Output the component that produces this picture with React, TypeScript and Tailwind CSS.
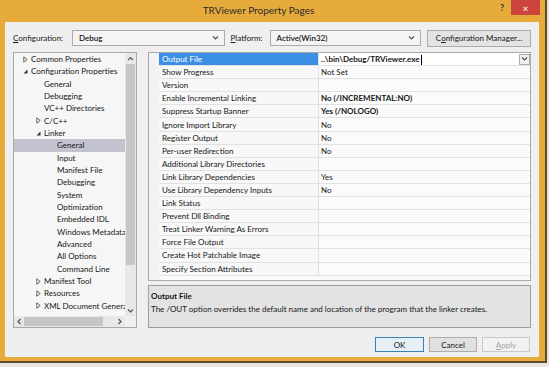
const treeItems: { label: string; level: number; arrow?: "open" | "closed"; selected?: boolean }[] = [
  { label: "Common Properties", level: 0, arrow: "closed" },
  { label: "Configuration Properties", level: 0, arrow: "open" },
  { label: "General", level: 1 },
  { label: "Debugging", level: 1 },
  { label: "VC++ Directories", level: 1 },
  { label: "C/C++", level: 1, arrow: "closed" },
  { label: "Linker", level: 1, arrow: "open" },
  { label: "General", level: 2, selected: true },
  { label: "Input", level: 2 },
  { label: "Manifest File", level: 2 },
  { label: "Debugging", level: 2 },
  { label: "System", level: 2 },
  { label: "Optimization", level: 2 },
  { label: "Embedded IDL", level: 2 },
  { label: "Windows Metadata", level: 2 },
  { label: "Advanced", level: 2 },
  { label: "All Options", level: 2 },
  { label: "Command Line", level: 2 },
  { label: "Manifest Tool", level: 1, arrow: "closed" },
  { label: "Resources", level: 1, arrow: "closed" },
  { label: "XML Document Generator", level: 1, arrow: "closed" },
];

const indent = ["pl-[9px]", "pl-[22px]", "pl-[35px]"];

const props: { name: string; value: string; bold?: boolean; selected?: boolean }[] = [
  { name: "Output File", value: "..\\bin\\Debug/TRViewer.exe", bold: true, selected: true },
  { name: "Show Progress", value: "Not Set" },
  { name: "Version", value: "" },
  { name: "Enable Incremental Linking", value: "No (/INCREMENTAL:NO)", bold: true },
  { name: "Suppress Startup Banner", value: "Yes (/NOLOGO)", bold: true },
  { name: "Ignore Import Library", value: "No" },
  { name: "Register Output", value: "No" },
  { name: "Per-user Redirection", value: "No" },
  { name: "Additional Library Directories", value: "" },
  { name: "Link Library Dependencies", value: "Yes" },
  { name: "Use Library Dependency Inputs", value: "No" },
  { name: "Link Status", value: "" },
  { name: "Prevent Dll Binding", value: "" },
  { name: "Treat Linker Warning As Errors", value: "" },
  { name: "Force File Output", value: "" },
  { name: "Create Hot Patchable Image", value: "" },
  { name: "Specify Section Attributes", value: "" },
];

const Chevron = ({ dir = "down" }: { dir?: "down" | "up" | "left" | "right" }) => {
  const d = {
    down: "M1 1.5l2.5 2.5L6 1.5",
    up: "M1 4l2.5-2.5L6 4",
    left: "M4.5 1L2 3.5 4.5 6",
    right: "M2.5 1L5 3.5 2.5 6",
  }[dir];
  const box = dir === "down" || dir === "up" ? "0 0 7 5.5" : "0 0 7 7";
  return (
    <svg width="7" height={dir === "down" || dir === "up" ? 5.5 : 7} viewBox={box}>
      <path d={d} stroke="#555" strokeWidth="1.2" fill="none" />
    </svg>
  );
};

const TreeArrow = ({ kind }: { kind: "open" | "closed" }) =>
  kind === "open" ? (
    <svg width="5" height="5" viewBox="0 0 5 5">
      <path d="M4.5 0.5V4.5H0.5Z" fill="#333" />
    </svg>
  ) : (
    <svg width="5" height="7" viewBox="0 0 5 7">
      <path d="M0.8 0.8L4.2 3.5L0.8 6.2Z" stroke="#555" strokeWidth="0.9" fill="none" />
    </svg>
  );

const Dropdown = ({ value, width }: { value: string; width: string }) => (
  <div className={`${width} h-[16px] border border-[#acacac] bg-[#f4f4f4] flex items-center justify-between pl-[6px] pr-[5px]`}>
    <span className="font-semibold">{value}</span>
    <Chevron />
  </div>
);

export default function App() {
  return (
    <div className="w-[549px] h-[367px] bg-[#e9e6df] font-['Lato',sans-serif] text-[8px] text-[#161616] overflow-hidden">
      <div className="w-[547px] h-[363px] bg-[#e6ab3b] border-r-2 border-b-2 border-[#5b4a2c] flex flex-col pl-[5px] pr-[6px] pb-[4px]">
        {/* title bar */}
        <div className="h-[22px] relative flex items-center justify-center">
          <span className="text-[10px] text-[#2b2b2b] pb-[1px] pr-[27px]">TRViewer Property Pages</span>
          <span className="absolute left-[495px] top-[1px] text-[9px] font-bold text-[#333]">?</span>
          <div className="absolute left-[506px] top-0 w-[29px] h-[15px] bg-[#cd443f] flex items-center justify-center text-white text-[10px] leading-none">
            ×
          </div>
        </div>

        {/* client */}
        <div className="flex-1 bg-[#efefef] flex flex-col px-[8px]">
          <div className="mt-[8px] h-[16px] flex items-center">
            <span className="w-[59px]">
              <span className="underline">C</span>onfiguration:
            </span>
            <Dropdown value="Debug" width="w-[153px]" />
            <span className="w-[42px] ml-[3px] pl-[3px]">
              <span className="underline">P</span>latform:
            </span>
            <Dropdown value="Active(Win32)" width="w-[152px]" />
            <div className="ml-[6px] w-[104px] h-[17px] border border-[#acacac] bg-[#e3e3e3] flex items-center justify-center">
              C<span className="underline">o</span>nfiguration Manager...
            </div>
          </div>

          <div className="mt-[6px] h-[276px] flex gap-[11px]">
            {/* tree */}
            <div className="w-[124px] border border-[#a9a9a9] bg-[#f6f6f6] flex flex-col">
              <div className="flex-1 flex min-h-0">
                <div className="flex-1 overflow-hidden">
                  {treeItems.map((t, i) => (
                    <div
                      key={i}
                      className={`h-[12.33px] flex items-center whitespace-nowrap ${indent[t.level]} ${t.selected ? "bg-[#c3c3cf]" : ""}`}
                    >
                      <span className="w-[8px] shrink-0 flex items-center">{t.arrow && <TreeArrow kind={t.arrow} />}</span>
                      <span>{t.label}</span>
                    </div>
                  ))}
                </div>
                <div className="w-[11px] shrink-0 bg-[#e8e8e8] flex flex-col">
                  <div className="h-[11px] flex items-center justify-center">
                    <Chevron dir="up" />
                  </div>
                  <div className="h-[201px] mx-[1px] bg-[#c6c6c6]" />
                  <div className="flex-1" />
                  <div className="h-[11px] flex items-center justify-center">
                    <Chevron dir="down" />
                  </div>
                </div>
              </div>
              <div className="h-[11px] flex bg-[#e8e8e8]">
                <div className="w-[10px] flex items-center justify-center">
                  <Chevron dir="left" />
                </div>
                <div className="w-[79px] my-[1px] bg-[#c6c6c6]" />
                <div className="flex-1" />
                <div className="w-[11px] flex items-center justify-center">
                  <Chevron dir="right" />
                </div>
                <div className="w-[11px] bg-[#f0f0f0]" />
              </div>
            </div>

            {/* property grid + description */}
            <div className="w-[385px] flex flex-col">
              <div className="h-[229px] border border-[#a9a9a9] bg-[#f3f3f3] flex">
                <div className="w-[10px]" />
                <div className="flex-1 flex flex-col">
                  {props.map((p, i) => (
                    <div key={i} className="h-[13.1px] flex border-b border-[#e2e2e2]">
                      <div
                        className={`w-[160px] pl-[3px] flex items-center border-r border-[#e2e2e2] ${p.selected ? "bg-[#3a8ee4] text-white" : "bg-[#f8f8f8]"}`}
                      >
                        {p.name}
                      </div>
                      <div
                        className={`flex-1 pl-[2px] flex items-center justify-between ${p.bold ? "font-bold" : ""} ${p.selected ? "bg-white" : "bg-[#fbfbfb]"}`}
                      >
                        <span>
                          {p.value}
                          {p.selected && <span className="inline-block w-[1px] h-[10px] bg-black align-middle ml-[1px]" />}
                        </span>
                        {p.selected && (
                          <div className="w-[11px] h-[11px] border border-[#acacac] bg-[#f0f0f0] flex items-center justify-center">
                            <Chevron />
                          </div>
                        )}
                      </div>
                    </div>
                  ))}
                  <div className="flex-1 bg-[#fbfbfb]" />
                </div>
              </div>
              <div className="mt-[4px] flex-1 border border-[#9d9d9d] bg-[#e3e3e3] px-[2px] pt-[4px]">
                <div className="font-bold">Output File</div>
                <div className="mt-[1px]">The /OUT option overrides the default name and location of the program that the linker creates.</div>
              </div>
            </div>
          </div>

          <div className="mt-[9px] h-[15px] flex justify-end gap-[5px] pr-[1px]">
            <div className="w-[49px] border border-[#3c7fb1] bg-[#e6eef6] flex items-center justify-center">OK</div>
            <div className="w-[48px] border border-[#adadad] bg-[#e1e1e1] flex items-center justify-center">Cancel</div>
            <div className="w-[48px] border border-[#c9c9c9] bg-[#f2f2f2] text-[#a3a3a3] flex items-center justify-center">
              <span className="underline">A</span>pply
            </div>
          </div>
        </div>
      </div>
    </div>
  );
}
